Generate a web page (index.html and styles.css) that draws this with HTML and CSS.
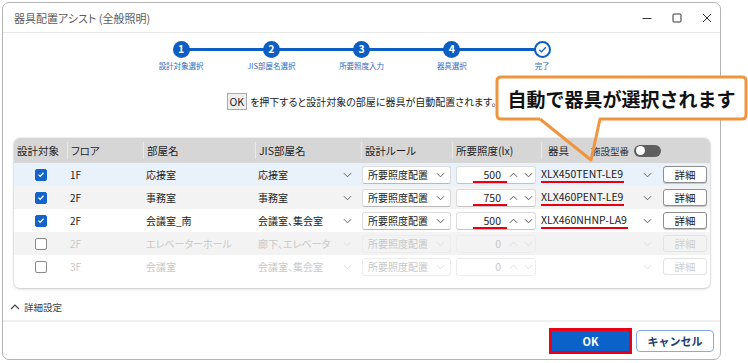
FILE: index.html
```html
<!DOCTYPE html>
<html lang="ja">
<head>
    <meta charset="UTF-8">
    <title>器具配置アシスト (全般照明)</title>
    <link rel="stylesheet" href="styles.css">
</head>
<body>
    <div class="window">
        <div class="titlebar">
            <span class="title">器具配置アシスト (全般照明)</span>
            <div class="controls">
                <svg viewBox="0 0 10 10"><path d="M0.5 5.5h9"/></svg>
                <svg viewBox="0 0 10 10"><rect x="1" y="1" width="8" height="8" rx="1"/></svg>
                <svg viewBox="0 0 10 10"><path d="M1 1l8 8M9 1l-8 8"/></svg>
            </div>
        </div>

        <!-- steps -->
        <div class="steps">
            <div class="step"><div class="dot">1</div><div class="step-label">設計対象選択</div></div>
            <div class="step"><div class="dot">2</div><div class="step-label">JIS部屋名選択</div></div>
            <div class="step"><div class="dot">3</div><div class="step-label">所要照度入力</div></div>
            <div class="step"><div class="dot">4</div><div class="step-label">器具選択</div></div>
            <div class="step">
                <div class="dot done"><svg viewBox="0 0 12 12"><path d="M2.5 6.3l2.3 2.3 4.8-5"/></svg></div>
                <div class="step-label">完了</div>
            </div>
        </div>

        <div class="hint"><span class="key">OK</span>を押下すると設計対象の部屋に器具が自動配置されます。</div>

        <div class="card">
            <div class="grid head">
                <div class="cell">設計対象</div>
                <div class="cell sep">フロア</div>
                <div class="cell sep">部屋名</div>
                <div class="cell sep">JIS部屋名</div>
                <div class="cell sep">設計ルール</div>
                <div class="cell sep">所要照度(lx)</div>
                <div class="cell sep fixture-head">
                    <span>器具</span>
                    <span class="sub">施設型番</span>
                    <span class="toggle"></span>
                </div>
            </div>

            <div class="grid row active">
                <div class="cell center"><span class="check on"><svg viewBox="0 0 12 12"><path d="M3 6.2l2 2 4-4.3"/></svg></span></div>
                <div class="cell">1F</div>
                <div class="cell">応接室</div>
                <div class="cell">応接室<svg class="chev" viewBox="0 0 10 6"><path d="M1 1l4 4 4-4"/></svg></div>
                <div class="cell"><div class="select">所要照度配置<svg class="chev" viewBox="0 0 10 6"><path d="M1 1l4 4 4-4"/></svg></div></div>
                <div class="cell"><div class="num"><span class="val marked">500</span><span class="spin"><svg viewBox="0 0 10 6"><path d="M1 5l4-4 4 4"/></svg><svg viewBox="0 0 10 6"><path d="M1 1l4 4 4-4"/></svg></span></div></div>
                <div class="cell fixture"><span class="model">XLX450TENT-LE9</span><svg class="chev" viewBox="0 0 10 6"><path d="M1 1l4 4 4-4"/></svg><button class="detail">詳細</button></div>
            </div>

            <div class="grid row alt">
                <div class="cell center"><span class="check on"><svg viewBox="0 0 12 12"><path d="M3 6.2l2 2 4-4.3"/></svg></span></div>
                <div class="cell">2F</div>
                <div class="cell">事務室</div>
                <div class="cell">事務室<svg class="chev" viewBox="0 0 10 6"><path d="M1 1l4 4 4-4"/></svg></div>
                <div class="cell"><div class="select">所要照度配置<svg class="chev" viewBox="0 0 10 6"><path d="M1 1l4 4 4-4"/></svg></div></div>
                <div class="cell"><div class="num"><span class="val marked">750</span><span class="spin"><svg viewBox="0 0 10 6"><path d="M1 5l4-4 4 4"/></svg><svg viewBox="0 0 10 6"><path d="M1 1l4 4 4-4"/></svg></span></div></div>
                <div class="cell fixture"><span class="model">XLX460PENT-LE9</span><svg class="chev" viewBox="0 0 10 6"><path d="M1 1l4 4 4-4"/></svg><button class="detail">詳細</button></div>
            </div>

            <div class="grid row">
                <div class="cell center"><span class="check on"><svg viewBox="0 0 12 12"><path d="M3 6.2l2 2 4-4.3"/></svg></span></div>
                <div class="cell">2F</div>
                <div class="cell">会議室_南</div>
                <div class="cell">会議室、集会室<svg class="chev" viewBox="0 0 10 6"><path d="M1 1l4 4 4-4"/></svg></div>
                <div class="cell"><div class="select">所要照度配置<svg class="chev" viewBox="0 0 10 6"><path d="M1 1l4 4 4-4"/></svg></div></div>
                <div class="cell"><div class="num"><span class="val marked">500</span><span class="spin"><svg viewBox="0 0 10 6"><path d="M1 5l4-4 4 4"/></svg><svg viewBox="0 0 10 6"><path d="M1 1l4 4 4-4"/></svg></span></div></div>
                <div class="cell fixture"><span class="model">XLX460NHNP-LA9</span><svg class="chev" viewBox="0 0 10 6"><path d="M1 1l4 4 4-4"/></svg><button class="detail">詳細</button></div>
            </div>

            <div class="grid row alt off">
                <div class="cell center"><span class="check"></span></div>
                <div class="cell">2F</div>
                <div class="cell">エレベーターホール</div>
                <div class="cell">廊下、エレベータ<svg class="chev" viewBox="0 0 10 6"><path d="M1 1l4 4 4-4"/></svg></div>
                <div class="cell"><div class="select">所要照度配置<svg class="chev" viewBox="0 0 10 6"><path d="M1 1l4 4 4-4"/></svg></div></div>
                <div class="cell"><div class="num"><span class="val">0</span><span class="spin"><svg viewBox="0 0 10 6"><path d="M1 5l4-4 4 4"/></svg><svg viewBox="0 0 10 6"><path d="M1 1l4 4 4-4"/></svg></span></div></div>
                <div class="cell fixture"><span class="model"></span><svg class="chev" viewBox="0 0 10 6"><path d="M1 1l4 4 4-4"/></svg><button class="detail">詳細</button></div>
            </div>

            <div class="grid row off">
                <div class="cell center"><span class="check"></span></div>
                <div class="cell">3F</div>
                <div class="cell">会議室</div>
                <div class="cell">会議室、集会室<svg class="chev" viewBox="0 0 10 6"><path d="M1 1l4 4 4-4"/></svg></div>
                <div class="cell"><div class="select">所要照度配置<svg class="chev" viewBox="0 0 10 6"><path d="M1 1l4 4 4-4"/></svg></div></div>
                <div class="cell"><div class="num"><span class="val">0</span><span class="spin"><svg viewBox="0 0 10 6"><path d="M1 5l4-4 4 4"/></svg><svg viewBox="0 0 10 6"><path d="M1 1l4 4 4-4"/></svg></span></div></div>
                <div class="cell fixture"><span class="model"></span><svg class="chev" viewBox="0 0 10 6"><path d="M1 1l4 4 4-4"/></svg><button class="detail">詳細</button></div>
            </div>
        </div>

        <div class="advanced">
            <svg viewBox="0 0 10 6"><path d="M1 5l4-4 4 4"/></svg>
            <span>詳細設定</span>
        </div>

        <div class="footer">
            <button class="btn-ok">OK</button>
            <button class="btn-cancel">キャンセル</button>
        </div>
    </div>

    <!-- annotation bubble -->
    <div class="callout">
        <svg viewBox="0 0 253 88">
            <rect x="2" y="2" width="249" height="42" rx="4" fill="#fff"/>
            <path class="bubble-line" d="M45 44H6Q2 44 2 40V6Q2 2 6 2H247Q251 2 251 6V40Q251 44 247 44H105L96 85L45 44"/>
        </svg>
        <div class="callout-text">自動で器具が選択されます</div>
    </div>
</body>
</html>
```

FILE: styles.css
```css
* {
    margin: 0;
    padding: 0;
    box-sizing: border-box;
}

body {
    font-family: "Noto Sans CJK JP", "Noto Sans", sans-serif;
    font-feature-settings: "palt";
    background: #fff;
    color: #222;
    width: 748px;
    height: 363px;
    overflow: hidden;
    position: relative;
}

.window {
    margin: 2px 0 0 2px;
    width: 719px;
    height: 358px;
    border: 1px solid #b4b4b4;
    border-radius: 7px;
    background: #fff;
    display: flex;
    flex-direction: column;
}

.titlebar {
    height: 30px;
    display: flex;
    align-items: center;
    padding: 0 8px 0 11px;
    border-bottom: 1px solid #e8e8e8;
}

.title {
    font-size: 11px;
    color: #5c5c5c;
}

.controls {
    margin-left: auto;
    display: flex;
    gap: 20px;
}

.controls svg {
    width: 10px;
    height: 10px;
    fill: none;
    stroke: #333;
    stroke-width: 1;
}

/* stepper */
.steps {
    display: flex;
    padding-left: 133px;
    margin-top: 8px;
    position: relative;
}

.steps::before {
    content: "";
    position: absolute;
    left: 178px;
    top: 7px;
    width: 361px;
    height: 3px;
    background: #0d5ec2;
}

.step {
    width: 90.25px;
    display: flex;
    flex-direction: column;
    align-items: center;
    position: relative;
}

.dot {
    width: 17px;
    height: 17px;
    border-radius: 50%;
    background: #0d5ec2;
    color: #fff;
    font-size: 10.5px;
    font-weight: bold;
    display: flex;
    align-items: center;
    justify-content: center;
    line-height: 1;
}

.dot.done {
    background: #fff;
    border: 2px solid #0d5ec2;
}

.dot.done svg {
    width: 11px;
    height: 11px;
    fill: none;
    stroke: #0d5ec2;
    stroke-width: 1.4;
}

.step-label {
    margin-top: 3px;
    font-size: 7.5px;
    line-height: 10px;
    color: #2b6cc4;
    white-space: nowrap;
}

/* hint */
.hint {
    margin-top: 21px;
    height: 18px;
    display: flex;
    align-items: center;
    justify-content: center;
    font-size: 10px;
    color: #222;
}

.key {
    display: inline-block;
    height: 17px;
    line-height: 15px;
    padding: 0 2px;
    border: 1px solid #a9a9a9;
    background: #efefef;
    margin-right: 3px;
    font-size: 10.5px;
}

/* table card */
.card {
    margin: 28px 10px 0 11px;
    border-radius: 6px;
    overflow: hidden;
    background: #fff;
    box-shadow: 0 1px 3px rgba(0, 0, 0, 0.2), 0 0 0 1px rgba(0, 0, 0, 0.04);
    padding-bottom: 10px;
}

.grid {
    display: grid;
    grid-template-columns: 53px 76px 112px 106px 91px 89px 1fr;
    align-items: center;
}

.head {
    height: 25px;
    background: #d6d6d6;
    font-size: 10.5px;
    color: #1e1e1e;
}

.head .cell {
    height: 17px;
    padding-left: 3px;
}

.head .cell.sep {
    border-left: 1px solid #e9e9e9;
}

.fixture-head span:first-child {
    padding-left: 3px;
}

.fixture-head .sub {
    margin-left: 22px;
    font-size: 9.5px;
    color: #333;
}

.toggle {
    margin-left: 5px;
    width: 27px;
    height: 12px;
    border-radius: 6px;
    background: #5f5f5f;
    position: relative;
}

.toggle::after {
    content: "";
    position: absolute;
    left: 1.5px;
    top: 1.5px;
    width: 9px;
    height: 9px;
    border-radius: 50%;
    background: #fff;
}

.cell {
    display: flex;
    align-items: center;
    padding-left: 3px;
    white-space: nowrap;
}

.row {
    height: 23px;
    font-size: 10px;
    color: #222;
}

.row.active {
    background: #e9f1fb;
}

.row.alt {
    background: #f3f3f3;
}

.row .cell:nth-child(4) {
    padding-right: 9px;
}

.row .cell:nth-child(4) .chev {
    margin-left: auto;
}

.row .cell:nth-child(5),
.row .cell:nth-child(6) {
    padding-left: 0;
}

.cell.center {
    justify-content: center;
    padding-left: 0;
}

.chev {
    width: 9px;
    height: 6px;
    fill: none;
    stroke: #555;
    stroke-width: 1;
}

.check {
    width: 12px;
    height: 12px;
    border-radius: 2px;
    border: 1px solid #8a8a8a;
    background: #fff;
    display: flex;
    align-items: center;
    justify-content: center;
}

.check.on {
    background: #1463c8;
    border-color: #1463c8;
}

.check svg {
    width: 11px;
    height: 11px;
    fill: none;
    stroke: #fff;
    stroke-width: 1.5;
}

.select {
    margin-left: 1px;
    width: 89px;
    height: 18px;
    border: 1px solid #dcdcdc;
    border-bottom-color: #b9b9b9;
    border-radius: 3px;
    background: #fff;
    display: flex;
    align-items: center;
    padding: 0 5px 0 5px;
}

.select .chev {
    margin-left: auto;
}

.num {
    margin-left: 4px;
    width: 80px;
    height: 18px;
    border: 1px solid #dcdcdc;
    border-bottom-color: #c4c4c4;
    border-radius: 3px;
    background: #fff;
    display: flex;
    justify-content: flex-end;
    align-items: stretch;
    font-size: 10.5px;
}

.val {
    line-height: 14px;
    padding: 1px 6px 0 11px;
    border-bottom: 2px solid transparent;
}

.val.marked {
    border-bottom-color: #e60012;
}

.spin {
    display: flex;
    align-items: center;
    gap: 6px;
    padding: 0 1px 0 2px;
    margin-right: 1px;
}

.spin svg {
    width: 9px;
    height: 6px;
    fill: none;
    stroke: #444;
    stroke-width: 1;
}

.fixture {
    padding-left: 0;
    padding-right: 3px;
}

.model {
    line-height: 14px;
    padding: 1px 1px 0 0;
    border-bottom: 2px solid #e60012;
    font-size: 10.5px;
}

.model:empty {
    border-bottom: none;
}

.fixture .chev {
    margin-left: auto;
}

.detail {
    margin-left: 11px;
    width: 44px;
    height: 17px;
    border: 1px solid #8e8e8e;
    border-radius: 3px;
    background: #fff;
    font-family: inherit;
    font-size: 10.5px;
    color: #222;
    box-shadow: 0 1px 0 #c8c8c8;
}

.row.off {
    color: #c8c8c8;
}

.row.off .chev,
.row.off .spin svg {
    stroke: #dadada;
}

.row.off .select,
.row.off .num {
    border-color: #ececec;
    background: transparent;
}

.row.off .detail {
    border-color: #e3e3e3;
    color: #cfcfcf;
    box-shadow: none;
    background: transparent;
}

/* bottom */
.advanced {
    margin-top: 12px;
    height: 14px;
    padding-left: 7px;
    display: flex;
    align-items: center;
    gap: 4px;
    font-size: 9.5px;
    color: #444;
}

.advanced svg {
    width: 10px;
    height: 6px;
    fill: none;
    stroke: #444;
    stroke-width: 1.2;
}

.footer {
    margin-top: auto;
    height: 39px;
    border-top: 2px solid #efefef;
    display: flex;
    justify-content: flex-end;
    align-items: center;
    gap: 4px;
    padding-right: 6px;
}

.btn-ok {
    width: 83px;
    height: 26px;
    border: 3px solid #ec0016;
    background: #0b63c9;
    color: #fff;
    font-family: inherit;
    font-size: 11px;
    font-weight: bold;
}

.btn-cancel {
    width: 78px;
    height: 22px;
    border: 1.5px solid #82aee3;
    border-radius: 4px;
    background: #fff;
    color: #1c3d6e;
    font-family: inherit;
    font-size: 11px;
    font-weight: bold;
}

/* annotation */
.callout {
    position: absolute;
    left: 495px;
    top: 75px;
    width: 253px;
    height: 88px;
}

.callout svg {
    position: absolute;
    left: 0;
    top: 0;
    width: 253px;
    height: 88px;
}

.bubble-line {
    fill: none;
    stroke: #f0953f;
    stroke-width: 3;
    stroke-linejoin: round;
}

.callout-text {
    position: absolute;
    left: 2px;
    top: 2px;
    width: 249px;
    height: 42px;
    display: flex;
    align-items: center;
    justify-content: center;
    font-size: 19px;
    font-weight: bold;
    font-feature-settings: normal;
    color: #111;
}
```
